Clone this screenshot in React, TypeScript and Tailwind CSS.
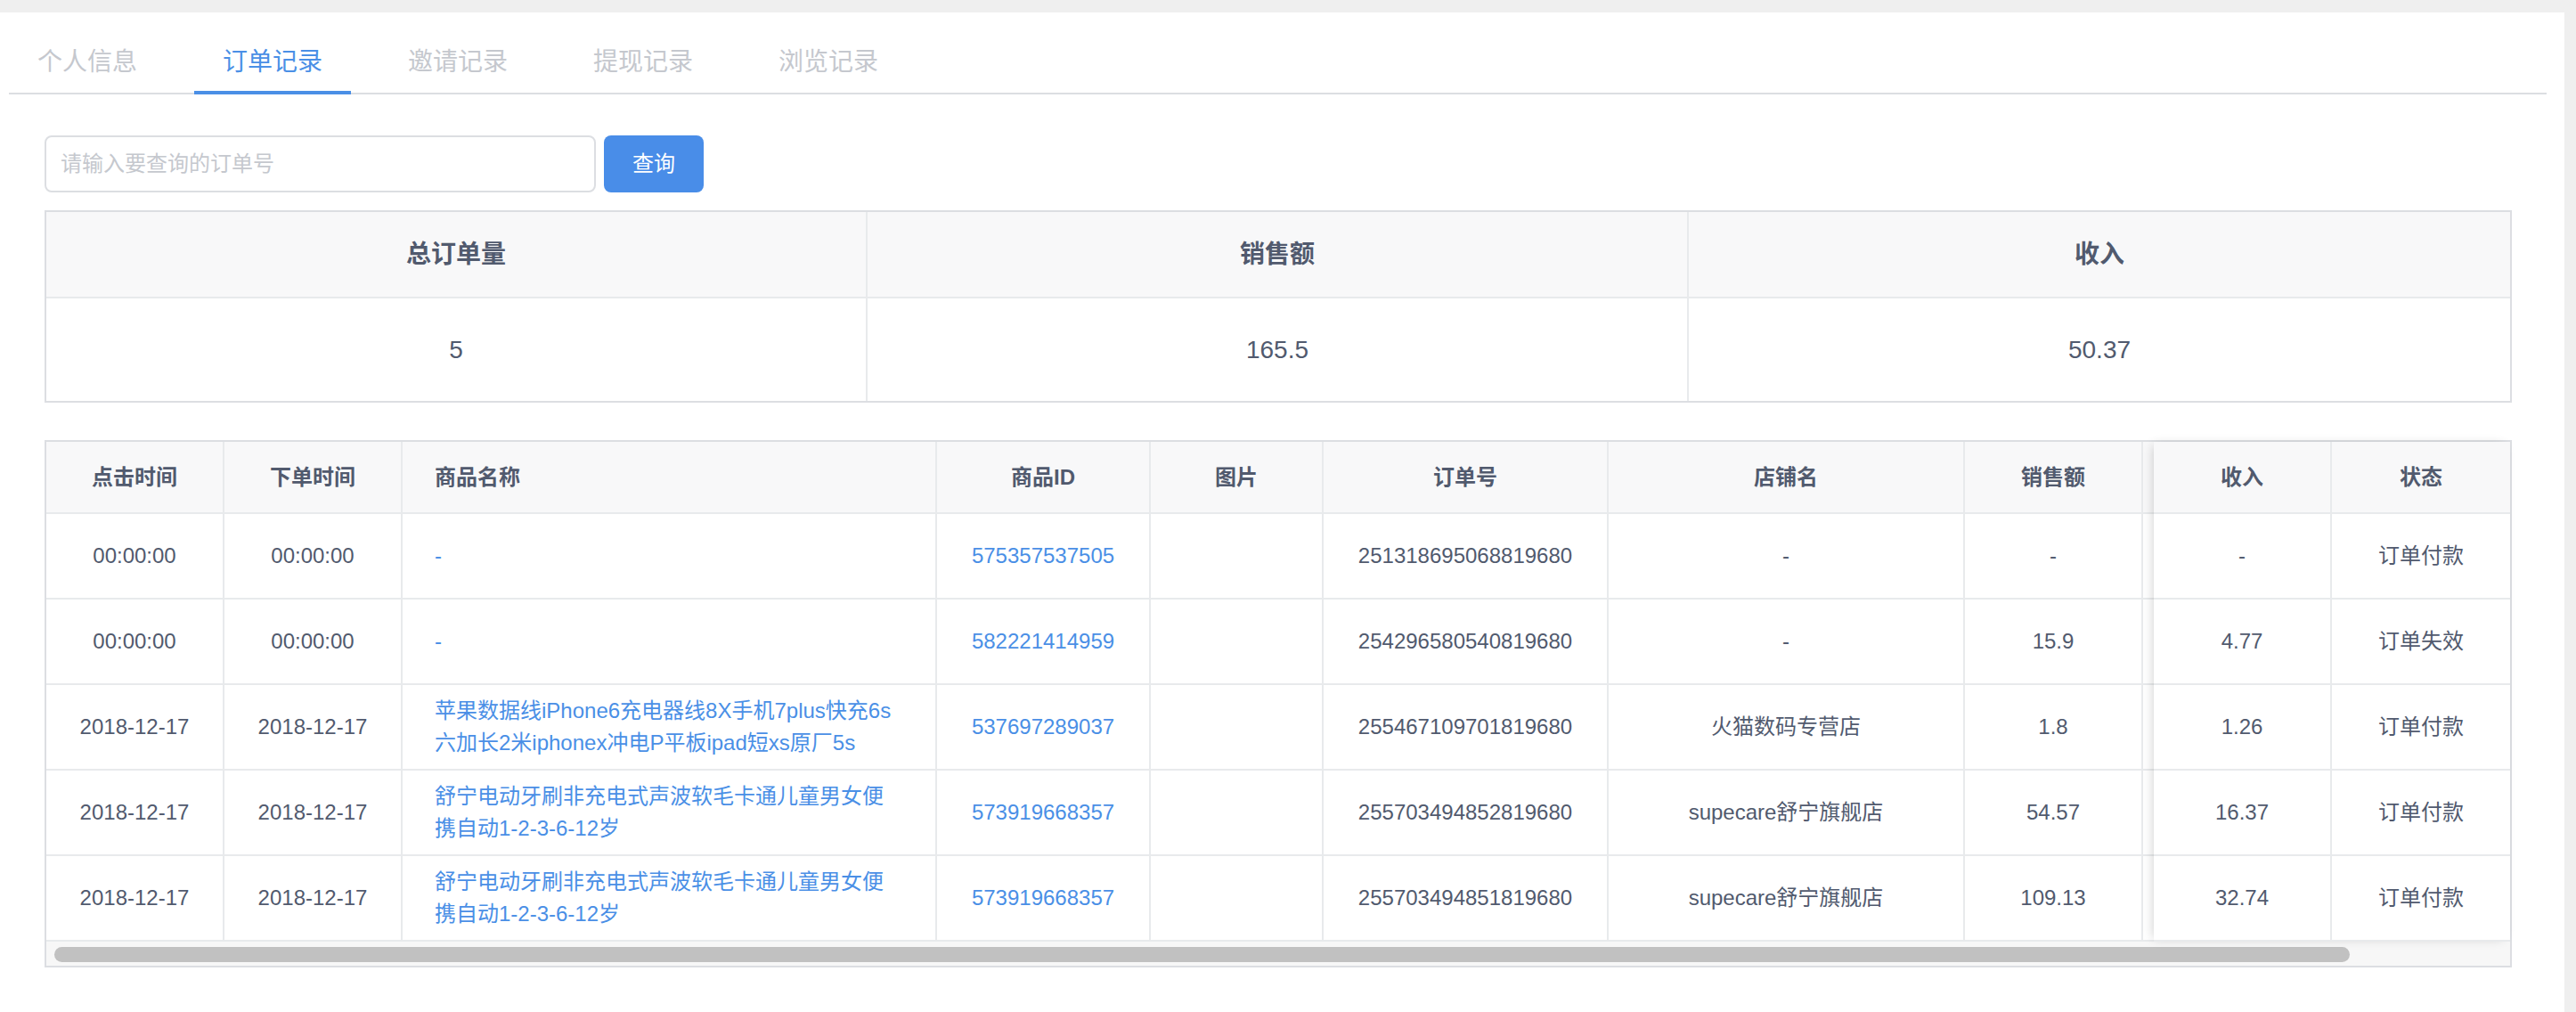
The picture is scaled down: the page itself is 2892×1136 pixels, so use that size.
import React from "react";

const FONT = "font-['Liberation_Sans','Noto_Sans_CJK_SC',sans-serif]";
const BLUE = "text-[#4a8fe6]";

type Row = {
  click: string;
  order: string;
  name: string[];
  id: string;
  no: string;
  shop: string;
  sales: string;
  income: string;
  status: string;
};

const rows: Row[] = [
  {
    click: "00:00:00",
    order: "00:00:00",
    name: ["-"],
    id: "575357537505",
    no: "251318695068819680",
    shop: "-",
    sales: "-",
    income: "-",
    status: "订单付款",
  },
  {
    click: "00:00:00",
    order: "00:00:00",
    name: ["-"],
    id: "582221414959",
    no: "254296580540819680",
    shop: "-",
    sales: "15.9",
    income: "4.77",
    status: "订单失效",
  },
  {
    click: "2018-12-17",
    order: "2018-12-17",
    name: ["苹果数据线iPhone6充电器线8X手机7plus快充6s", "六加长2米iphonex冲电P平板ipad短xs原厂5s"],
    id: "537697289037",
    no: "255467109701819680",
    shop: "火猫数码专营店",
    sales: "1.8",
    income: "1.26",
    status: "订单付款",
  },
  {
    click: "2018-12-17",
    order: "2018-12-17",
    name: ["舒宁电动牙刷非充电式声波软毛卡通儿童男女便", "携自动1-2-3-6-12岁"],
    id: "573919668357",
    no: "255703494852819680",
    shop: "supecare舒宁旗舰店",
    sales: "54.57",
    income: "16.37",
    status: "订单付款",
  },
  {
    click: "2018-12-17",
    order: "2018-12-17",
    name: ["舒宁电动牙刷非充电式声波软毛卡通儿童男女便", "携自动1-2-3-6-12岁"],
    id: "573919668357",
    no: "255703494851819680",
    shop: "supecare舒宁旗舰店",
    sales: "109.13",
    income: "32.74",
    status: "订单付款",
  },
];

type Col = {
  key: keyof Row | null;
  title: string;
  w: string;
  left?: boolean;
  link?: boolean;
};

// 收入 / 状态 live in the fixed right block; the scrolling part only keeps an empty column under it
const scrollCols: Col[] = [
  { key: "click", title: "点击时间", w: "w-[200px]" },
  { key: "order", title: "下单时间", w: "w-[200px]" },
  { key: "name", title: "商品名称", w: "w-[600px]", left: true, link: true },
  { key: "id", title: "商品ID", w: "w-[240px]", link: true },
  { key: null, title: "图片", w: "w-[194px]" },
  { key: "no", title: "订单号", w: "w-[320px]" },
  { key: "shop", title: "店铺名", w: "w-[400px]" },
  { key: "sales", title: "销售额", w: "w-[200px]" },
  { key: null, title: "", w: "w-[200px]" },
];

const fixedCols: Col[] = [
  { key: "income", title: "收入", w: "w-[200px]" },
  { key: "status", title: "状态", w: "w-[200px]" },
];

const tabs = ["个人信息", "订单记录", "邀请记录", "提现记录", "浏览记录"];

function HeadCell({ col, last }: { col: Col; last?: boolean }) {
  return (
    <div
      className={`${col.w} shrink-0 h-[81px] bg-[#f8f8f9] border-b-2 border-[#e8eaec] ${
        last ? "" : "border-r-2"
      } flex items-center px-[36px] text-[24px] font-bold ${col.left ? "justify-start" : "justify-center"}`}
    >
      {col.title}
    </div>
  );
}

function BodyCell({ col, row, last }: { col: Col; row: Row; last?: boolean }) {
  const value = col.key ? row[col.key] : null;
  return (
    <div
      className={`${col.w} shrink-0 h-[96px] border-b-2 border-[#e8eaec] ${
        last ? "" : "border-r-2"
      } flex items-center px-[36px] text-[24px] leading-[36px] ${col.left ? "justify-start" : "justify-center text-center"} ${
        col.link ? BLUE : ""
      }`}
    >
      {Array.isArray(value) ? (
        <div>
          {value.map((line, i) => (
            <div key={i}>{line}</div>
          ))}
        </div>
      ) : (
        value
      )}
    </div>
  );
}

export default function App() {
  return (
    <div className={`${FONT} w-[2892px] h-[1136px] bg-[#efefef] pt-[14px] pr-[13px] text-[#515a6e]`}>
      <div className="h-full w-full bg-white">
        {/* tabs */}
        <div className="ml-[10px] w-[2849px] h-[92px] border-b-2 border-[#dcdee2] flex">
          {tabs.map((t, i) => (
            <div
              key={t}
              className={`relative mr-[32px] px-[32px] pt-[35px] text-[28px] leading-[42px] ${
                i === 1 ? "text-[#4a8fe6]" : "text-[#c5c8ce]"
              }`}
            >
              {t}
              {i === 1 && <div className="absolute left-0 right-0 bottom-[-2px] h-[4px] bg-[#4a8fe6]" />}
            </div>
          ))}
        </div>

        <div className="pl-[50px]">
          {/* search */}
          <div className="mt-[46px] flex gap-[9px]">
            <div className="w-[619px] h-[64px] border-2 border-[#dcdee2] rounded-[8px] flex items-center px-[16px] text-[24px] text-[#c5c8ce]">
              请输入要查询的订单号
            </div>
            <button className="w-[112px] h-[64px] rounded-[8px] bg-[#498de8] text-white text-[24px]">查询</button>
          </div>

          {/* summary */}
          <div className="mt-[20px] w-[2770px] border-2 border-[#dcdee2] grid grid-cols-3 text-[28px]">
            {["总订单量", "销售额", "收入"].map((h, i) => (
              <div
                key={h}
                className={`h-[97px] bg-[#f8f8f9] border-b-2 border-[#e8eaec] flex items-center justify-center font-bold ${
                  i < 2 ? "border-r-2" : ""
                }`}
              >
                {h}
              </div>
            ))}
            {["5", "165.5", "50.37"].map((v, i) => (
              <div
                key={i}
                className={`h-[115px] border-[#e8eaec] flex items-center justify-center ${i < 2 ? "border-r-2" : ""}`}
              >
                {v}
              </div>
            ))}
          </div>

          {/* orders */}
          <div className="mt-[42px] w-[2770px] border-2 border-[#dcdee2]">
            <div className="flex">
              <div className="flex-1 overflow-hidden">
                <div className="w-max">
                  <div className="flex">
                    {scrollCols.map((c, i) => (
                      <HeadCell key={i} col={c} />
                    ))}
                  </div>
                  {rows.map((r, ri) => (
                    <div key={ri} className="flex">
                      {scrollCols.map((c, i) => (
                        <BodyCell key={i} col={c} row={r} />
                      ))}
                    </div>
                  ))}
                </div>
              </div>
              <div className="relative z-10 w-[400px] shrink-0 bg-white shadow-[-4px_0_12px_-4px_rgba(0,0,0,0.2)]">
                <div className="flex">
                  {fixedCols.map((c, i) => (
                    <HeadCell key={i} col={c} last={i === fixedCols.length - 1} />
                  ))}
                </div>
                {rows.map((r, ri) => (
                  <div key={ri} className="flex">
                    {fixedCols.map((c, i) => (
                      <BodyCell key={i} col={c} row={r} last={i === fixedCols.length - 1} />
                    ))}
                  </div>
                ))}
              </div>
            </div>
            <div className="h-[27px] bg-[#f7f7f7] pt-[6px] pl-[9px]">
              <div className="h-[17px] w-[2577px] rounded-full bg-[#c1c1c1]" />
            </div>
          </div>
        </div>
      </div>
    </div>
  );
}
